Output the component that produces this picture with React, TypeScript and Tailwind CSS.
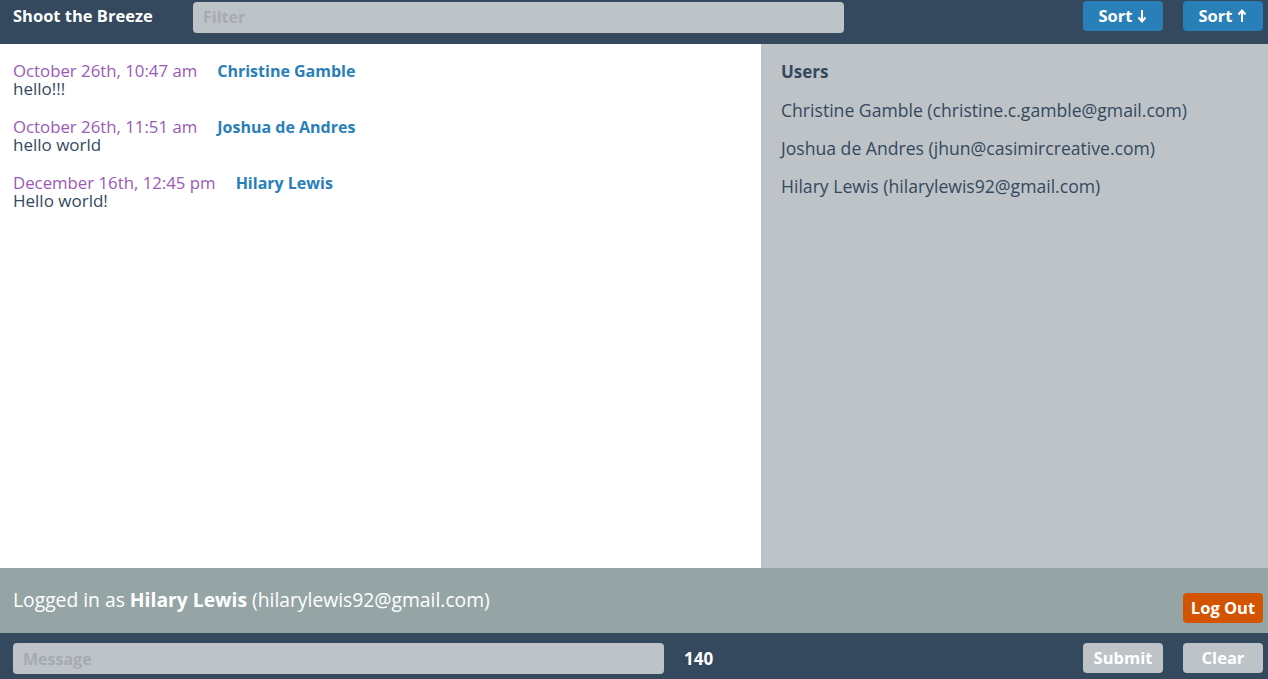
import { useState } from 'react';

const messages = [
  { date: 'October 26th, 10:47 am', user: 'Christine Gamble', body: 'hello!!!' },
  { date: 'October 26th, 11:51 am', user: 'Joshua de Andres', body: 'hello world' },
  { date: 'December 16th, 12:45 pm', user: 'Hilary Lewis', body: 'Hello world!' },
];

const users = [
  'Christine Gamble (christine.c.gamble@gmail.com)',
  'Joshua de Andres (jhun@casimircreative.com)',
  'Hilary Lewis (hilarylewis92@gmail.com)',
];

function Arrow({ up }: { up?: boolean }) {
  return (
    <svg width="10" height="14" viewBox="0 0 10 14" className={up ? 'rotate-180' : ''}>
      <path d="M5 1v11M1.5 8.5 5 12.5l3.5-4" fill="none" stroke="currentColor" strokeWidth="2" />
    </svg>
  );
}

export default function App() {
  const [draft, setDraft] = useState('');
  const [filter, setFilter] = useState('');

  return (
    <div className="flex flex-col h-[679px] w-full text-[#34495e] font-['Open_Sans',sans-serif] text-[17px]">
      <header className="flex items-center h-[44px] shrink-0 bg-[#34495e] px-[13px] pb-[12px]">
        <h1 className="w-[180px] font-bold text-white text-[16.5px]">Shoot the Breeze</h1>
        <input
          value={filter}
          onChange={(e) => setFilter(e.target.value)}
          placeholder="Filter"
          className="w-[651px] h-[31px] mt-[2px] rounded-[4px] bg-[#bdc3c7] px-[10px] text-[16px] font-bold placeholder:text-[#a5abb0] outline-none"
        />
        <div className="ml-auto flex gap-[20px] -mr-[8px]">
          <button className="flex items-center justify-center gap-[5px] w-[80px] h-[30px] rounded-[4px] bg-[#2980b9] text-white font-bold text-[16.5px]">
            Sort <Arrow />
          </button>
          <button className="flex items-center justify-center gap-[5px] w-[80px] h-[30px] rounded-[4px] bg-[#2980b9] text-white font-bold text-[16.5px]">
            Sort <Arrow up />
          </button>
        </div>
      </header>

      <main className="flex flex-1 min-h-0">
        <section className="w-[761px] bg-white px-[13px] pt-[18px] flex flex-col gap-[20px]">
          {messages.map((m) => (
            <article key={m.date} className="leading-[18px]">
              <div className="flex items-baseline gap-[20px]">
                <span className="text-[#9b59b6] text-[16.8px]">{m.date}</span>
                <span className="text-[#2980b9] font-bold text-[16px]">{m.user}</span>
              </div>
              <p>{m.body}</p>
            </article>
          ))}
        </section>
        <aside className="flex-1 bg-[#bdc3c7] px-[20px] pt-[17px] text-[17.6px]">
          <h2 className="font-bold leading-[22px] text-[17px]">Users</h2>
          <ul className="mt-[16px] flex flex-col gap-[16px]">
            {users.map((u) => (
              <li key={u} className="leading-[22px]">{u}</li>
            ))}
          </ul>
        </aside>
      </main>

      <div className="flex justify-between h-[65px] shrink-0 bg-[#95a5a6] px-[13px] pr-[5px]">
        <p className="self-center text-white text-[19.3px]">
          Logged in as <strong>Hilary Lewis</strong> (hilarylewis92@gmail.com)
        </p>
        <button className="self-end mb-[10px] w-[80px] h-[30px] rounded-[4px] bg-[#d35400] text-white font-bold text-[16.5px]">
          Log Out
        </button>
      </div>

      <footer className="flex items-start h-[46px] shrink-0 bg-[#34495e] px-[13px] pr-[5px] pt-[10px]">
        <input
          value={draft}
          onChange={(e) => setDraft(e.target.value)}
          placeholder="Message"
          className="w-[651px] h-[31px] rounded-[4px] bg-[#bdc3c7] px-[10px] text-[16px] font-bold placeholder:text-[#a5abb0] outline-none"
        />
        <span className="ml-[20px] h-[31px] leading-[31px] text-white font-bold">{140 - draft.length}</span>
        <div className="ml-auto flex gap-[20px]">
          <button className="w-[80px] h-[30px] rounded-[4px] bg-[#bdc3c7] text-white font-bold text-[16.5px]">
            Submit
          </button>
          <button className="w-[80px] h-[30px] rounded-[4px] bg-[#bdc3c7] text-white font-bold text-[16.5px]">
            Clear
          </button>
        </div>
      </footer>
    </div>
  );
}
